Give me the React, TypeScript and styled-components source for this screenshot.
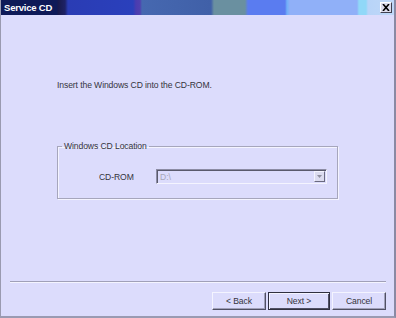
import React from "react";
import styled, { createGlobalStyle } from "styled-components";

const Global = createGlobalStyle`
  html, body { margin: 0; padding: 0; background: #dcdcfc; }
  body { font-family: "Liberation Sans", Arial, sans-serif; }
  * { box-sizing: border-box; }
`;

const Window = styled.div`
  width: 396px;
  height: 318px;
  display: flex;
  flex-direction: column;
  background: #dcdcfc;
  border-left: 1px solid #9a9ab0;
  border-right: 2px solid #8a8aa4;
  border-bottom: 2px solid #9a9ab2;
`;

const TitleBar = styled.div`
  height: 15px;
  display: flex;
  align-items: center;
  padding: 0 2px 0 3px;
  background: linear-gradient(
    to right,
    #0e1a58 0px,
    #0e1a58 56px,
    #181a4c 57px,
    #1e2266 64px,
    #2a3cb4 67px,
    #2a40bc 132px,
    #4a3cb0 135px,
    #5040b0 139px,
    #4668b0 141px,
    #4060a8 210px,
    #6a90a0 213px,
    #6a90a0 244px,
    #5a7cf0 247px,
    #5a7cf0 284px,
    #70b0f8 286px,
    #90b0f8 289px,
    #90b0f8 356px,
    #90d8f8 358px,
    #90d8f8 365px,
    #b8d4f8 367px,
    #c0d8f8 396px
  );
`;

const Title = styled.span`
  color: #ffffff;
  font-weight: bold;
  font-size: 9.5px;
  letter-spacing: -0.2px;
`;

const CloseButton = styled.div`
  margin-left: auto;
  width: 12px;
  height: 11px;
  background: #dcdcec;
  border: 1px solid;
  border-color: #ffffff #404050 #404050 #ffffff;
  display: flex;
  align-items: center;
  justify-content: center;
`;

const Body = styled.div`
  flex: 1;
  display: flex;
  flex-direction: column;
  padding: 65px 0 0 56px;
`;

const Instruction = styled.div`
  font-size: 8.6px;
  line-height: 11px;
  color: #34343c;
  letter-spacing: -0.1px;
`;

const GroupBox = styled.fieldset`
  margin: 50px 0 0 0;
  padding: 0;
  width: 281px;
  height: 58px;
  border: 1px solid #a6a6bc;
  box-shadow: inset 1px 1px 0 #f4f4ff, 1px 1px 0 #f4f4ff;
  display: flex;
  flex-direction: column;
`;

const Legend = styled.legend`
  margin-left: 4px;
  padding: 0 2px;
  font-size: 8.6px;
  line-height: 11px;
  color: #34343c;
  letter-spacing: -0.1px;
`;

const FieldRow = styled.div`
  display: flex;
  align-items: center;
  padding: 17px 0 0 41px;
`;

const FieldLabel = styled.span`
  width: 57px;
  font-size: 8.6px;
  color: #34343c;
  letter-spacing: -0.1px;
`;

const Combo = styled.div`
  width: 171px;
  height: 15px;
  display: flex;
  align-items: center;
  border: 1px solid;
  border-color: #8c8ca4 #f4f4ff #f4f4ff #8c8ca4;
  box-shadow: inset 1px 1px 0 #5a5a6c;
  padding: 1px 1px 1px 3px;
`;

const ComboText = styled.span`
  flex: 1;
  font-size: 8.6px;
  color: #a8a8b8;
`;

const ComboButton = styled.div`
  width: 11px;
  height: 11px;
  background: #dcdcf0;
  border: 1px solid;
  border-color: #f4f4ff #6a6a80 #6a6a80 #f4f4ff;
  display: flex;
  align-items: center;
  justify-content: center;
`;

const Footer = styled.div`
  display: flex;
  flex-direction: column;
  padding: 0 8px 6px 9px;
`;

const Separator = styled.div`
  height: 2px;
  border-top: 1px solid #a0a0b8;
  border-bottom: 1px solid #f4f4ff;
`;

const ButtonRow = styled.div`
  display: flex;
  justify-content: flex-end;
  gap: 2px;
  padding-top: 9px;
`;

const Button = styled.div<{ $default?: boolean; $w: number }>`
  width: ${(p) => p.$w}px;
  height: 18px;
  display: flex;
  align-items: center;
  justify-content: center;
  font-size: 8.6px;
  color: #34343c;
  letter-spacing: -0.1px;
  background: #dcdcfc;
  border: 1px solid;
  border-color: ${(p) => (p.$default ? "#303040" : "#f4f4ff #505064 #505064 #f4f4ff")};
  box-shadow: ${(p) =>
    p.$default
      ? "inset 1px 1px 0 #f4f4ff, inset -1px -1px 0 #505064"
      : "inset -1px -1px 0 #a0a0b8"};
`;

export default function App() {
  return (
    <>
      <Global />
      <Window>
        <TitleBar>
          <Title>Service CD</Title>
          <CloseButton>
            <svg width="8" height="7" viewBox="0 0 8 7">
              <path d="M1 0 L7 7 M7 0 L1 7" stroke="#000" strokeWidth="1.6" />
            </svg>
          </CloseButton>
        </TitleBar>
        <Body>
          <Instruction>Insert the Windows CD into the CD-ROM.</Instruction>
          <GroupBox>
            <Legend>Windows CD Location</Legend>
            <FieldRow>
              <FieldLabel>CD-ROM</FieldLabel>
              <Combo>
                <ComboText>D:\</ComboText>
                <ComboButton>
                  <svg width="5" height="3" viewBox="0 0 5 3">
                    <path d="M0 0 H5 L2.5 3 Z" fill="#9090a0" />
                  </svg>
                </ComboButton>
              </Combo>
            </FieldRow>
          </GroupBox>
        </Body>
        <Footer>
          <Separator />
          <ButtonRow>
            <Button $w={54}>&lt; Back</Button>
            <Button $w={62} $default>
              Next &gt;
            </Button>
            <Button $w={54}>Cancel</Button>
          </ButtonRow>
        </Footer>
      </Window>
    </>
  );
}
